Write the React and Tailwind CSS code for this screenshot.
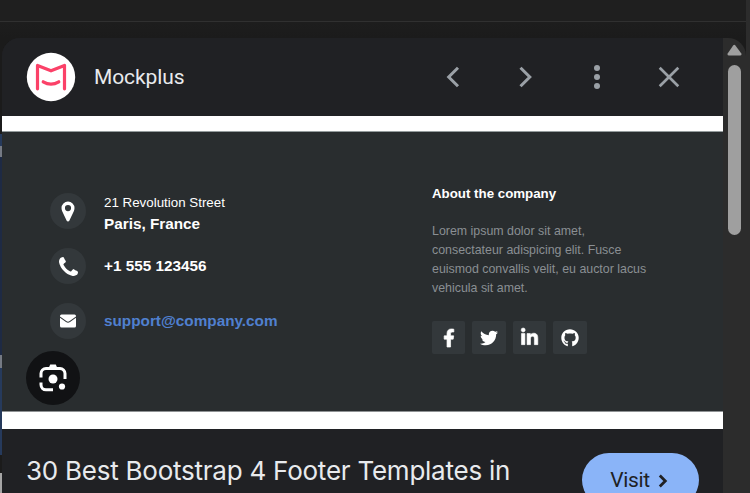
import { FaFacebookF, FaTwitter, FaLinkedinIn, FaGithub } from 'react-icons/fa';

const socials = [
  { name: 'Facebook', Icon: FaFacebookF, size: 18, weight: 20 },
  { name: 'Twitter', Icon: FaTwitter, size: 18, weight: 0 },
  { name: 'LinkedIn', Icon: FaLinkedinIn, size: 19, weight: 16 },
  { name: 'GitHub', Icon: FaGithub, size: 18, weight: 0 },
];

function PageEdge() {
  return (
    <div className="flex w-[2px] shrink-0 flex-col">
      <div className="h-[96px] bg-[#1b1b1b]" />
      <div className="h-[12px] bg-[#263a5c]" />
      <div className="h-[11px] bg-[#757a84]" />
      <div className="h-[198px] bg-[#1e2a44]" />
      <div className="h-[13px] bg-[#757a84]" />
      <div className="h-[87px] bg-[#263a5c]" />
      <div className="h-[18px] bg-[#1b1b1b]" />
      <div className="h-[20px] bg-[#a5a5a5]" />
    </div>
  );
}

function Header() {
  return (
    <header className="flex h-[78px] shrink-0 items-center bg-[#202124] pl-6 pr-[42px]">
      <svg className="size-[50px]" viewBox="0 0 50 50" fill="none">
        <circle cx="25" cy="25" r="24.2" fill="#fff" />
        <g stroke="#fb4168" strokeWidth="3.2" strokeLinecap="round" strokeLinejoin="round">
          <path d="M11.5 36.8V13.4L25 18.8L38.5 13.4V36.8" />
          <path d="M17.2 29.8Q25 34.6 32.8 29.8" />
        </g>
      </svg>
      <span className="ml-[18px] font-['Roboto',sans-serif] text-[21px] leading-7 tracking-[-0.1px] text-[#e8eaed]">
        Mockplus
      </span>
      <div className="ml-auto flex gap-12 text-[#9aa0a6]">
        <svg className="size-6" viewBox="0 0 24 24" fill="none" stroke="currentColor" strokeWidth="3">
          <path d="M17 2.7L7.7 12L17 21.3" />
        </svg>
        <svg className="size-6" viewBox="0 0 24 24" fill="none" stroke="currentColor" strokeWidth="3">
          <path d="M7.5 2.7L16.8 12L7.5 21.3" />
        </svg>
        <svg className="size-6" viewBox="0 0 24 24" fill="currentColor">
          <circle cx="12" cy="3" r="3" />
          <circle cx="12" cy="12" r="3" />
          <circle cx="12" cy="21" r="3" />
        </svg>
        <svg className="size-6" viewBox="0 0 24 24" fill="none" stroke="currentColor" strokeWidth="2.7">
          <path d="M2.7 2.7L21.3 21.3M21.3 2.7L2.7 21.3" />
        </svg>
      </div>
    </header>
  );
}

function Bubble({ children }) {
  return (
    <div className="flex size-9 shrink-0 items-center justify-center rounded-full bg-[#33383b] text-white">
      {children}
    </div>
  );
}

function Contact() {
  return (
    <div className="flex w-[382px] shrink-0 flex-col gap-[19px] pt-[61px] font-bold text-white">
      <div className="flex h-9 items-center gap-[18px]">
        <Bubble>
          <svg className="h-[21px] w-[14px]" viewBox="0 0 14 21" fill="currentColor">
            <path fillRule="evenodd" d="M7 .6a6.5 6.5 0 0 1 6.5 6.5c0 1.3-.3 2.3-.8 3.3L8.3 19.7a1.45 1.45 0 0 1-2.6 0L1.3 10.4C.8 9.4.5 8.4.5 7.1A6.5 6.5 0 0 1 7 .6zm0 3.400a3.100 3.100 0 1 0 0 6.200 3.100 3.100 0 0 0 0-6.200z" />
          </svg>
        </Bubble>
        <div className="pt-[4px]">
          <div className="text-[13.35px] leading-[21px] font-normal">21 Revolution Street</div>
          <div className="text-[15.3px] leading-[21px]">Paris, France</div>
        </div>
      </div>
      <div className="flex h-9 items-center gap-[18px]">
        <Bubble>
          <svg className="size-[19px]" viewBox="0 128 1408 1408" fill="currentColor">
            <path d="M1408 1240q0 27-10 70.5t-21 68.5q-21 50-122 106-94 51-186 51-27 0-53-3.5t-57.5-12.5-47-14.5-55.5-20.5-49-18q-98-35-175-83-127-79-264-216t-216-264q-48-77-83-175-3-9-18-49t-20.5-55.5-14.5-47-12.5-57.5-3.500-53q0-92 51-186 56-101 106-122 25-11 68.500-21t70.500-10q14 0 21 3 18 6 53 76 11 19 30 54t35 63.500 31 53.500q3 4 17.500 25t21.500 35.500 7 28.500q0 20-28.500 50t-62 55-62 53-28.500 46q0 9 5 22.500t8.500 20.500 14 24 11.500 19q76 137 174 235t235 174q2 1 19 11.500t24 14 20.500 8.500 22.500 5q18 0 46-28.500t53-62 55-62 50-28.500q14 0 28.500 7t35.500 21.500 25 17.500q25 15 53.500 31t63.500 35 54 30q70 35 76 53 3 7 3 21z" />
          </svg>
        </Bubble>
        <div className="text-[15.3px] leading-5">+1 555 123456</div>
      </div>
      <div className="flex h-9 items-center gap-[18px]">
        <Bubble>
          <svg className="h-[14px] w-4" viewBox="0 0 16 14" fill="currentColor">
            <path d="M1.500.5h13A1.500 1.500 0 0 1 16 2v.4L9.300 7.300Q8 8.200 6.700 7.300L0 2.400V2A1.500 1.500 0 0 1 1.500.5z" />
            <path d="M0 3.700L6 8.100Q8 9.400 10 8.100L16 3.700V12a1.500 1.500 0 0 1-1.500 1.500h-13A1.500 1.500 0 0 1 0 12z" />
          </svg>
        </Bubble>
        <div className="text-[15.3px] leading-5 text-[#5080cf]">support@company.com</div>
      </div>
    </div>
  );
}

function About() {
  return (
    <div className="pt-[52px]">
      <h3 className="text-[13.3px] leading-5 font-bold text-white">About the company</h3>
      <p className="mt-[18px] text-[12.4px] leading-[19px] whitespace-nowrap text-[#8a8f93]">
        Lorem ipsum dolor sit amet,<br />
        consectateur adispicing elit. Fusce<br />
        euismod convallis velit, eu auctor lacus<br />
        vehicula sit amet.
      </p>
      <div className="mt-[23px] flex gap-[7px]">
        {socials.map(({ name, Icon, size, weight }) => (
          <div key={name} className="flex size-[33.4px] items-center justify-center rounded-[2px] bg-[#33383b] text-white">
            <Icon size={size} strokeWidth={weight} className="overflow-visible" />
          </div>
        ))}
      </div>
    </div>
  );
}

function Preview() {
  return (
    <div className="relative h-[313px] shrink-0 bg-white pt-[15px]">
      <div className="flex h-[281px] border-y border-t-[#949c9d] border-b-[#8f9294] bg-[#292d2f] pl-12 font-['Liberation_Sans',Arial,sans-serif]">
        <Contact />
        <About />
      </div>
      <div className="absolute top-[235px] left-6 flex size-[54px] items-center justify-center rounded-full bg-[#111214]">
        <svg className="size-7" viewBox="0 0 28 28" fill="none" stroke="#fff" strokeWidth="3">
          <path d="M2 13.500V9.500a5 5 0 0 1 5-5H21a5 5 0 0 1 5 5V15" />
          <path d="M2 18.500v2.300a5 5 0 0 0 5 5h7" />
          <path d="M9.500 4.500L11.200.5h5.600l1.700 4z" fill="#fff" stroke="none" />
          <circle cx="14" cy="15" r="4.500" fill="#fff" stroke="none" />
          <circle cx="23" cy="22.500" r="3.100" fill="#fff" stroke="none" />
        </svg>
      </div>
    </div>
  );
}

function Scrollbar() {
  return (
    <div className="flex w-[23px] shrink-0 flex-col bg-[#2c2c2c] pl-[4px]">
      <svg className="mt-[6px] h-3 w-[15px]" viewBox="0 0 15.500 12" fill="#9f9f9f">
        <path d="M6.500 1.200Q7.500 0 8.500 1.200L14.800 9.600Q15.500 11.500 13.800 11.800H1.700Q0 11.500.7 9.600z" />
      </svg>
      <div className="mt-[9px] ml-px h-[170px] w-[13px] rounded-full bg-[#9f9f9f]" />
    </div>
  );
}

export default function App() {
  return (
    <div className="flex h-[493px] w-[750px] overflow-hidden bg-[#2c2c2c]">
      <div className="flex w-[746px] flex-col">
        <div className="h-[38px] shrink-0 bg-linear-to-b from-[#202020] to-[#1b1b1b]">
          <div className="h-[22px] border-b border-[#303030] bg-[#1f1f1f]" />
        </div>
        <div className="flex flex-1 bg-[#1b1b1b]">
          <PageEdge />
          <div className="flex min-w-0 flex-1 overflow-hidden rounded-tl-[18px] rounded-tr-[18px]">
            <main className="flex h-[455px] w-[721px] shrink-0 flex-col overflow-hidden bg-[#202124]">
              <Header />
              <Preview />
              <div className="flex justify-between pr-6 pl-6">
                <h1 className="mt-[24px] font-['Inter',sans-serif] text-[26px] leading-9 tracking-[-0.24px] whitespace-nowrap text-[#e8eaed]">
                  30 Best Bootstrap 4 Footer Templates in
                </h1>
                <button className="mt-6 flex h-[54px] w-[117px] shrink-0 items-center justify-center gap-[8px] rounded-full bg-[#8ab4f8] pt-px pr-[3px] font-['Roboto',sans-serif] text-[21px] tracking-[-0.4px] text-[#202124]">
                  Visit
                  <svg className="h-[14px] w-[10px]" viewBox="0 0 10 14" fill="none" stroke="currentColor" strokeWidth="2.8">
                    <path d="M1.800 1.500L7.300 7L1.800 12.500" />
                  </svg>
                </button>
              </div>
            </main>
            <Scrollbar />
          </div>
        </div>
      </div>
    </div>
  );
}
